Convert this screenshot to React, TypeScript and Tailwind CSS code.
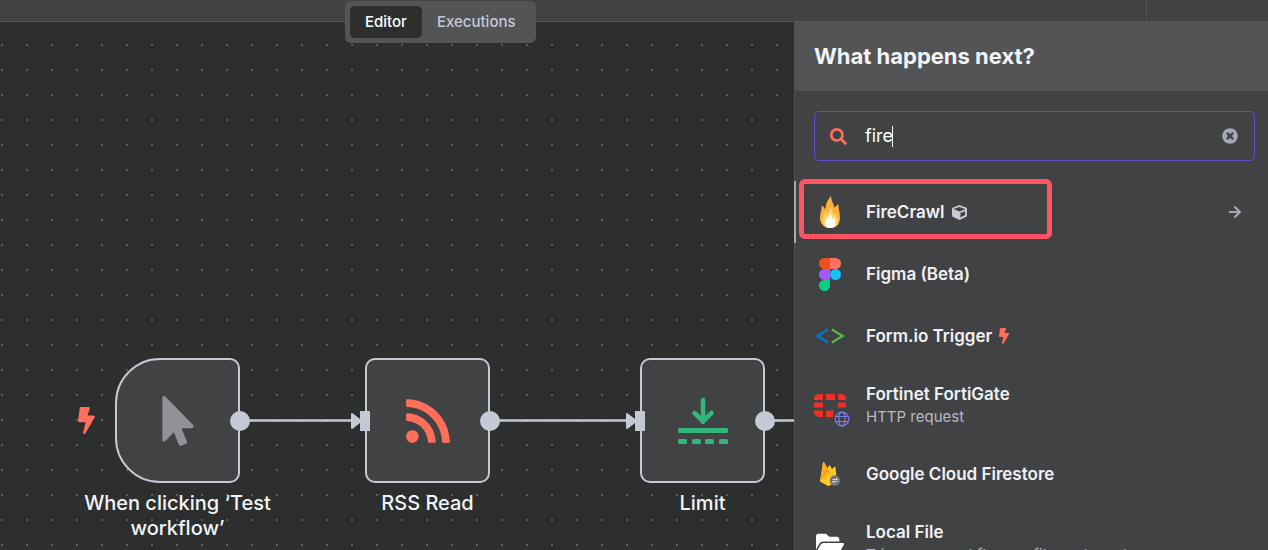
import { useState, type ReactNode } from "react";
import { FaArrowRight, FaBolt, FaCube, FaFolderOpen, FaMousePointer, FaRss, FaSearch, FaTimesCircle } from "react-icons/fa";

function LimitIcon() {
  return (
    <svg viewBox="0 0 50 50" className="h-[50px] w-[50px]" fill="none" stroke="#31b67b" aria-hidden="true">
      <path d="M25 4v22M16.500 17l8.500 8.300l8.500-8.300" strokeWidth="4.600" strokeLinecap="round" strokeLinejoin="round" />
      <g fill="#31b67b" stroke="none">
        <rect x="0" y="32" width="50" height="5" rx="1.500" />
        <rect x="0" y="43" width="9" height="5" rx="1.500" />
        <rect x="14" y="43" width="9" height="5" rx="1.500" />
        <rect x="27" y="43" width="9" height="5" rx="1.500" />
        <rect x="41" y="43" width="9" height="5" rx="1.500" />
      </g>
    </svg>
  );
}

function FlameIcon() {
  return (
    <svg viewBox="0 0 32 36" className="h-9 w-8" aria-hidden="true">
      <path d="M16.500 34C9 34 6 29 6 23.500c0-4.500 2-7 1.700-12 1.900 1 3.100 2.500 3.500 4.700C11.700 11 13 6 17.200 2c-.3 4 2.300 7 3.400 12 .5-1.500 1.800-3 4.200-3.800-1 3.600 1.200 7.300 1.200 13.300C26 29.500 23 34 16.500 34Z" fill="#ffb13b" />
      <path d="M16.400 34c-5 0-7.700-3-7.700-7.500 0-4 1.800-6 2.800-8.500 1 .8 1.600 1.800 2 3 .6-3.200 1.500-5.500 3.700-8 .5 3.500 2 5.500 2.800 8.500.6-1 1.300-1.800 2.200-2.300 0 2.600 1.600 4.300 1.600 7.800 0 4-2.400 7-7.400 7Z" fill="#ffd66a" />
      <path d="M16.300 34c-3.600 0-5-2.200-5-5.100 0-2.400 1.200-4 1.900-5.600l1.400 1.400c.3-2 1.100-3.700 2.300-5.200.4 2.200 1.300 3.700 1.900 5.400l1.200-1.200c.5 1.500 1.500 3 1.500 5.100 0 3.200-1.700 5.200-5.200 5.200Z" fill="#fff" />
    </svg>
  );
}

function FigmaIcon() {
  return (
    <svg viewBox="0 0 22 33" className="h-[33px] w-[22px]" aria-hidden="true">
      <path d="M5.500 0H11v11H5.500a5.500 5.500 0 0 1 0-11Z" fill="#f24e1e" />
      <path d="M11 0h5.500a5.500 5.500 0 0 1 0 11H11Z" fill="#ff7262" />
      <path d="M5.500 11H11v11H5.500a5.500 5.500 0 0 1 0-11Z" fill="#a259ff" />
      <circle cx="16.500" cy="16.500" r="5.500" fill="#1abcfe" />
      <path d="M5.500 22H11v5.500A5.500 5.500 0 1 1 5.500 22Z" fill="#0acf83" />
    </svg>
  );
}

function FormIcon() {
  return (
    <svg viewBox="0 0 30 16" className="h-4 w-[30px]" fill="none" strokeWidth="2.600" aria-hidden="true">
      <path d="M13 1.500 2.500 8 13 14.500" stroke="#0b76bd" />
      <path d="M17 1.500 27.500 8 17 14.500" stroke="#56b146" />
    </svg>
  );
}

function FortinetIcon() {
  return (
    <span className="relative block h-6 w-8">
      <svg viewBox="0 0 32 24" className="h-6 w-8" fill="#ee3124" aria-hidden="true">
        <path d="M5 1h4v6H0V6a5 5 0 0 1 5-5ZM12 1h9v6h-9ZM24 1h3a5 5 0 0 1 5 5v1h-8ZM0 9.500h9v5H0ZM24 9.500h8v5h-8ZM0 17.500h9V24H5a5 5 0 0 1-5-5ZM12 17.500h8l-1 6.500h-7Z" />
      </svg>
      <svg viewBox="0 0 20 20" className="absolute top-4 left-[18px] h-5 w-5" aria-hidden="true">
        <circle cx="10" cy="10" r="9.500" fill="#414244" />
        <g fill="none" stroke="#7d7be8" strokeWidth="1.200">
          <circle cx="10" cy="10" r="6.900" />
          <ellipse cx="10" cy="10" rx="3.200" ry="6.900" />
          <path d="M3.500 7.500h13M3.500 12.500h13" />
        </g>
      </svg>
    </span>
  );
}

function FirestoreIcon() {
  return (
    <svg viewBox="0 0 24 28" className="h-7 w-6" aria-hidden="true">
      <path d="M2 21.500 5 2.500c.1-.7.700-.8 1-.3l3.500 6L11 5.500c.3-.4.800-.4 1 0L14 9l2.500-2.300c.3-.3.800-.2.900.3L19 21.500l-8 4.300c-.5.300-1 .3-1.500 0Z" fill="#ffca28" />
      <path d="M2 21.500 5 2.500c.1-.7.700-.8 1-.3l3.500 6Z" fill="#ffa726" />
      <path d="m2 21.500 7.500-13L12 13Z" fill="#ff8f00" />
      <path d="M2 21.500 10 11l2 2Z" fill="#fbc02d" />
      <circle cx="17" cy="20.500" r="5.200" fill="#757575" />
      <path d="M14.500 19.500h5l-1.500-1.700M19.500 21.500h-5l1.500 1.700" fill="none" stroke="#d8d8d8" strokeWidth="1" />
    </svg>
  );
}

type NodeItem = {
  name: string;
  icon: ReactNode;
  badge?: ReactNode;
  description?: string;
  active?: boolean;
};

const items: NodeItem[] = [
  { name: "FireCrawl", icon: <FlameIcon />, badge: <FaCube className="h-[15px] w-[15px] text-[#c3c9d5]" />, active: true },
  { name: "Figma (Beta)", icon: <FigmaIcon /> },
  { name: "Form.io Trigger", icon: <FormIcon />, badge: <FaBolt className="-ml-1 h-4 w-4 text-[#ff6f5c]" /> },
  { name: "Fortinet FortiGate", icon: <FortinetIcon />, description: "HTTP request" },
  { name: "Google Cloud Firestore", icon: <FirestoreIcon /> },
  { name: "Local File", icon: <FaFolderOpen className="h-7 w-7 text-white" />, description: "Triggers a workflow on file system changes" },
];

function ItemRow({ item }: { item: NodeItem }) {
  return (
    <li className="relative">
      <button
        type="button"
        className={`flex w-full items-center gap-5 border-l-2 pr-[26px] pl-[18px] text-left ${item.description ? "py-4" : "py-5"} ${item.active ? "border-[#a3a9b6]" : "border-transparent"}`}
      >
        <span className="flex h-5 w-8 shrink-0 items-center justify-center">{item.icon}</span>
        <span className="min-w-0 flex-1">
          <span className="flex items-center gap-2 text-[17px] leading-[22px] font-semibold text-[#f0f1f5]">
            {item.name}
            {item.badge}
          </span>
          {item.description && (
            <span className="mt-0.5 block truncate text-[15px] leading-5 text-[#b5bac6]">{item.description}</span>
          )}
        </span>
        {item.active && <FaArrowRight className="h-[14px] w-[14px] text-[#a3a9b6]" />}
      </button>
      {item.active && (
        <span className="pointer-events-none absolute -top-[2px] left-[5px] h-[60px] w-[253px] rounded-md border-5 border-[#ff5463]" />
      )}
    </li>
  );
}

function CanvasNode({ place, shape, input, label, children }: {
  place: string;
  shape: string;
  input?: boolean;
  label: string;
  children: ReactNode;
}) {
  return (
    <div className={`absolute top-[336px] w-[125px] ${place}`}>
      <div className={`relative flex h-[125px] items-center justify-center border-2 border-[#c3c9d5] bg-[#414244] ${shape}`}>
        {children}
        {input && <span className="absolute top-[51px] -left-[7px] h-5 w-[10px] bg-[#c3c9d5]" />}
        <span className="absolute top-[51px] -right-3 h-5 w-5 rounded-full bg-[#c3c9d5]" />
      </div>
      <p className="-mx-10 mt-2 text-center text-xl leading-[25px] font-medium text-[#f2f4f8]">{label}</p>
    </div>
  );
}

function Canvas() {
  return (
    <section className="relative min-w-0 flex-1 overflow-hidden bg-[#2d2e2e]" aria-label="Workflow canvas">
      <svg className="absolute inset-0 h-full w-full" aria-hidden="true">
        <defs>
          <pattern id="dots" width="25" height="25" patternUnits="userSpaceOnUse">
            <rect x="1" y="22" width="2" height="2" fill="#5c5d5d" />
          </pattern>
        </defs>
        <rect width="100%" height="100%" fill="url(#dots)" />
        <path d="M240 398.500h118M490 398.500h143M765 398.500h40" stroke="#c3c9d5" strokeWidth="2.500" />
        <path d="m352 392 9 7-9 7ZM627 392l9 7-9 7Z" fill="#c3c9d5" stroke="#c3c9d5" strokeWidth="2" strokeLinejoin="round" />
      </svg>
      <FaBolt className="absolute top-[385px] left-[73px] h-[27px] w-[27px] text-[#ff6f5c]" />
      <CanvasNode place="left-[115px]" shape="rounded-l-[45px] rounded-r-[10px]" label="When clicking ‘Test workflow’">
        <FaMousePointer className="h-[50px] w-[50px] text-[#909298]" />
      </CanvasNode>
      <CanvasNode place="left-[365px]" shape="rounded-[10px]" input label="RSS Read">
        <FaRss className="h-[50px] w-[50px] text-[#ff6f5c]" />
      </CanvasNode>
      <CanvasNode place="left-[640px]" shape="rounded-[10px]" input label="Limit">
        <LimitIcon />
      </CanvasNode>
    </section>
  );
}

export default function App() {
  const [query, setQuery] = useState("fire");
  return (
    <div className="relative flex h-screen flex-col overflow-hidden bg-[#414244] font-['Inter',sans-serif]">
      <header className="flex h-[22px] shrink-0 justify-end border-b border-[#535456]">
        <div className="w-[122px] border-l border-[#535456]" />
      </header>
      <nav className="absolute top-[1px] left-[345px] z-10 flex rounded-md bg-[#535456] p-[5px] text-[15px] leading-8 font-medium">
        <button type="button" className="rounded-[5px] bg-[#2d2e2e] px-[15px] text-white">Editor</button>
        <button type="button" className="px-[15px] text-[#c3c9d5]">Executions</button>
      </nav>
      <main className="flex min-h-0 flex-1">
        <Canvas />
        <aside className="relative w-[474px] shrink-0 border-l border-[#535456]">
          <h2 className="bg-[#535456] px-[19px] pt-[18px] pb-[19px] text-[22px] leading-8 font-bold text-[#f2f4f8]">What happens next?</h2>
          <div className="pt-5 pr-[13px] pb-5 pl-[19px]">
            <div className="flex h-[50px] items-center rounded-[5px] border border-[#5d4ecb] pr-4 pl-[15px]">
              <FaSearch className="h-[17px] w-[17px] shrink-0 text-[#ff6f5c]" />
              <div className="relative ml-[18px] flex-1">
                <input
                  aria-label="Search nodes"
                  value={query}
                  onChange={(event) => setQuery(event.target.value)}
                  className="w-full bg-transparent text-lg leading-6 text-white outline-none"
                />
                <span className="pointer-events-none absolute top-[2px] left-[27px] h-[21px] w-px bg-white" />
              </div>
              <button type="button" aria-label="Clear search" onClick={() => setQuery("")}>
                <FaTimesCircle className="h-4 w-4 text-[#a3a9b6]" />
              </button>
            </div>
          </div>
          <ul className="-ml-px">
            {items.map((item) => (
              <ItemRow key={item.name} item={item} />
            ))}
          </ul>
        </aside>
      </main>
    </div>
  );
}
